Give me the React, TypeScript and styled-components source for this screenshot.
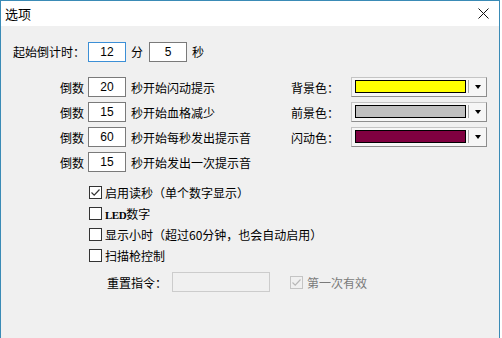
import React from "react";
import styled, { createGlobalStyle } from "styled-components";

const Global = createGlobalStyle`
  html, body { margin: 0; padding: 0; background: #ffffff; }
  body {
    font-family: "Noto Sans CJK SC", "Noto Sans", sans-serif;
    font-size: 12px;
    color: #000;
  }
`;

const Window = styled.div`
  width: 500px;
  height: 338px;
  box-sizing: border-box;
  border: 1px solid #3a8bb6;
  border-bottom: none;
  background: #f0f0f0;
  display: flex;
  flex-direction: column;
`;

const TitleBar = styled.div`
  height: 25px;
  flex: none;
  background: #ffffff;
  display: flex;
  align-items: center;
  justify-content: space-between;
  padding-left: 4px;
`;

const Title = styled.span`
  font-size: 13px;
  line-height: 25px;
`;

const CloseButton = styled.div`
  width: 31px;
  height: 25px;
  display: flex;
  align-items: center;
  justify-content: center;
`;

const Body = styled.div`
  flex: 1;
  padding: 16px 0 0 12px;
  display: flex;
  flex-direction: column;
`;

const Row = styled.div`
  display: flex;
  align-items: center;
  height: 20px;
`;

const RowLabel = styled.span`
  width: 75px;
  flex: none;
  line-height: 20px;
`;

const NumInput = styled.div<{ $focused?: boolean }>`
  width: 38px;
  height: 20px;
  box-sizing: border-box;
  border: 1px solid ${(p) => (p.$focused ? "#3c8fd6" : "#7a7a7a")};
  background: #fff;
  display: flex;
  align-items: center;
  justify-content: center;
  font-family: "Liberation Sans", "DejaVu Sans", sans-serif;
  font-size: 12px;
`;

const Unit = styled.span`
  margin: 0 6px 0 5px;
  line-height: 20px;
`;

const Grid = styled.div`
  margin-top: 15px;
  display: grid;
  grid-template-columns: 75px 38px 165px 60px 136px;
  grid-auto-rows: 20px;
  row-gap: 5px;
  align-items: center;
`;

const CountLabel = styled.span`
  justify-self: end;
  padding-right: 4px;
`;

const CountText = styled.span`
  padding-left: 5px;
  white-space: nowrap;
`;

const ColorLabel = styled.span`
  white-space: nowrap;
`;

const Combo = styled.div`
  height: 20px;
  box-sizing: border-box;
  border: 1px solid #c4c4c4;
  border-right-color: #8d8d8d;
  border-bottom-color: #8d8d8d;
  background: #f6f6f6;
  display: flex;
  align-items: stretch;
`;

const Swatch = styled.div<{ $color: string }>`
  flex: 1;
  margin: 2px 0 3px 3px;
  border: 1px solid #000;
  background: ${(p) => p.$color};
`;

const DropButton = styled.div`
  width: 17px;
  flex: none;
  border-left: 1px solid #a8a8a8;
  margin: 2px 0 3px 2px;
  display: flex;
  align-items: center;
  justify-content: center;
`;

const Arrow = styled.div`
  width: 0;
  height: 0;
  border-left: 3.5px solid transparent;
  border-right: 3.5px solid transparent;
  border-top: 4px solid #000;
`;

const CheckList = styled.div`
  margin-top: 10px;
  padding-left: 76px;
  display: flex;
  flex-direction: column;
`;

const CheckRow = styled.label`
  height: 21px;
  display: flex;
  align-items: center;
  gap: 3px;
  white-space: nowrap;
`;

const Box = styled.span<{ $disabled?: boolean }>`
  width: 13px;
  height: 13px;
  box-sizing: border-box;
  border: 1px solid ${(p) => (p.$disabled ? "#c4c4c4" : "#333333")};
  background: ${(p) => (p.$disabled ? "#f0f0f0" : "#ffffff")};
  display: flex;
  flex: none;
`;

const SerifBit = styled.span`
  font-family: "Liberation Serif", "DejaVu Serif", serif;
  font-weight: bold;
  font-size: 11px;
  letter-spacing: -0.5px;
`;

const ResetRow = styled.div`
  margin-top: 6px;
  padding-left: 94px;
  display: flex;
  align-items: center;
  height: 20px;
`;

const ResetLabel = styled.span`
  width: 60px;
  flex: none;
`;

const DisabledInput = styled.div`
  margin-left: 5px;
  width: 98px;
  height: 20px;
  box-sizing: border-box;
  border: 1px solid #cccccc;
  background: #f0f0f0;
`;

const DisabledCheck = styled.label`
  margin-left: 20px;
  display: flex;
  align-items: center;
  gap: 4px;
  color: #7a7a7a;
`;

const Check = ({ checked, disabled }: { checked?: boolean; disabled?: boolean }) => (
  <Box $disabled={disabled}>
    {checked && (
      <svg width="11" height="11" viewBox="0 0 11 11">
        <path
          d="M1.5 5.5 L4.2 8.2 L9.5 2.5"
          fill="none"
          stroke={disabled ? "#b8b8b8" : "#333"}
          strokeWidth="1.2"
        />
      </svg>
    )}
  </Box>
);

const colors = [
  { label: "背景色：", color: "#ffff00" },
  { label: "前景色：", color: "#c0c0c0" },
  { label: "闪动色：", color: "#800040" },
];

const counts = [
  { n: "20", text: "秒开始闪动提示" },
  { n: "15", text: "秒开始血格减少" },
  { n: "60", text: "秒开始每秒发出提示音" },
  { n: "15", text: "秒开始发出一次提示音" },
];

export default function App() {
  return (
    <>
      <Global />
      <Window>
        <TitleBar>
          <Title>选项</Title>
          <CloseButton>
            <svg width="11" height="11" viewBox="0 0 11 11">
              <path d="M0.5 0.5 L10.5 10.5 M10.5 0.5 L0.5 10.5" stroke="#111" strokeWidth="1" />
            </svg>
          </CloseButton>
        </TitleBar>
        <Body>
          <Row>
            <RowLabel>起始倒计时：</RowLabel>
            <NumInput $focused>12</NumInput>
            <Unit>分</Unit>
            <NumInput>5</NumInput>
            <Unit>秒</Unit>
          </Row>
          <Grid>
            {counts.map((c, i) => (
              <React.Fragment key={i}>
                <CountLabel>倒数</CountLabel>
                <NumInput>{c.n}</NumInput>
                <CountText>{c.text}</CountText>
                {colors[i] ? (
                  <>
                    <ColorLabel>{colors[i].label}</ColorLabel>
                    <Combo>
                      <Swatch $color={colors[i].color} />
                      <DropButton>
                        <Arrow />
                      </DropButton>
                    </Combo>
                  </>
                ) : (
                  <>
                    <span />
                    <span />
                  </>
                )}
              </React.Fragment>
            ))}
          </Grid>
          <CheckList>
            <CheckRow>
              <Check checked />
              启用读秒（单个数字显示）
            </CheckRow>
            <CheckRow>
              <Check />
              <span>
                <SerifBit>LED</SerifBit>数字
              </span>
            </CheckRow>
            <CheckRow>
              <Check />
              显示小时（超过60分钟，也会自动启用）
            </CheckRow>
            <CheckRow>
              <Check />
              扫描枪控制
            </CheckRow>
          </CheckList>
          <ResetRow>
            <ResetLabel>重置指令：</ResetLabel>
            <DisabledInput />
            <DisabledCheck>
              <Check checked disabled />
              第一次有效
            </DisabledCheck>
          </ResetRow>
        </Body>
      </Window>
    </>
  );
}
